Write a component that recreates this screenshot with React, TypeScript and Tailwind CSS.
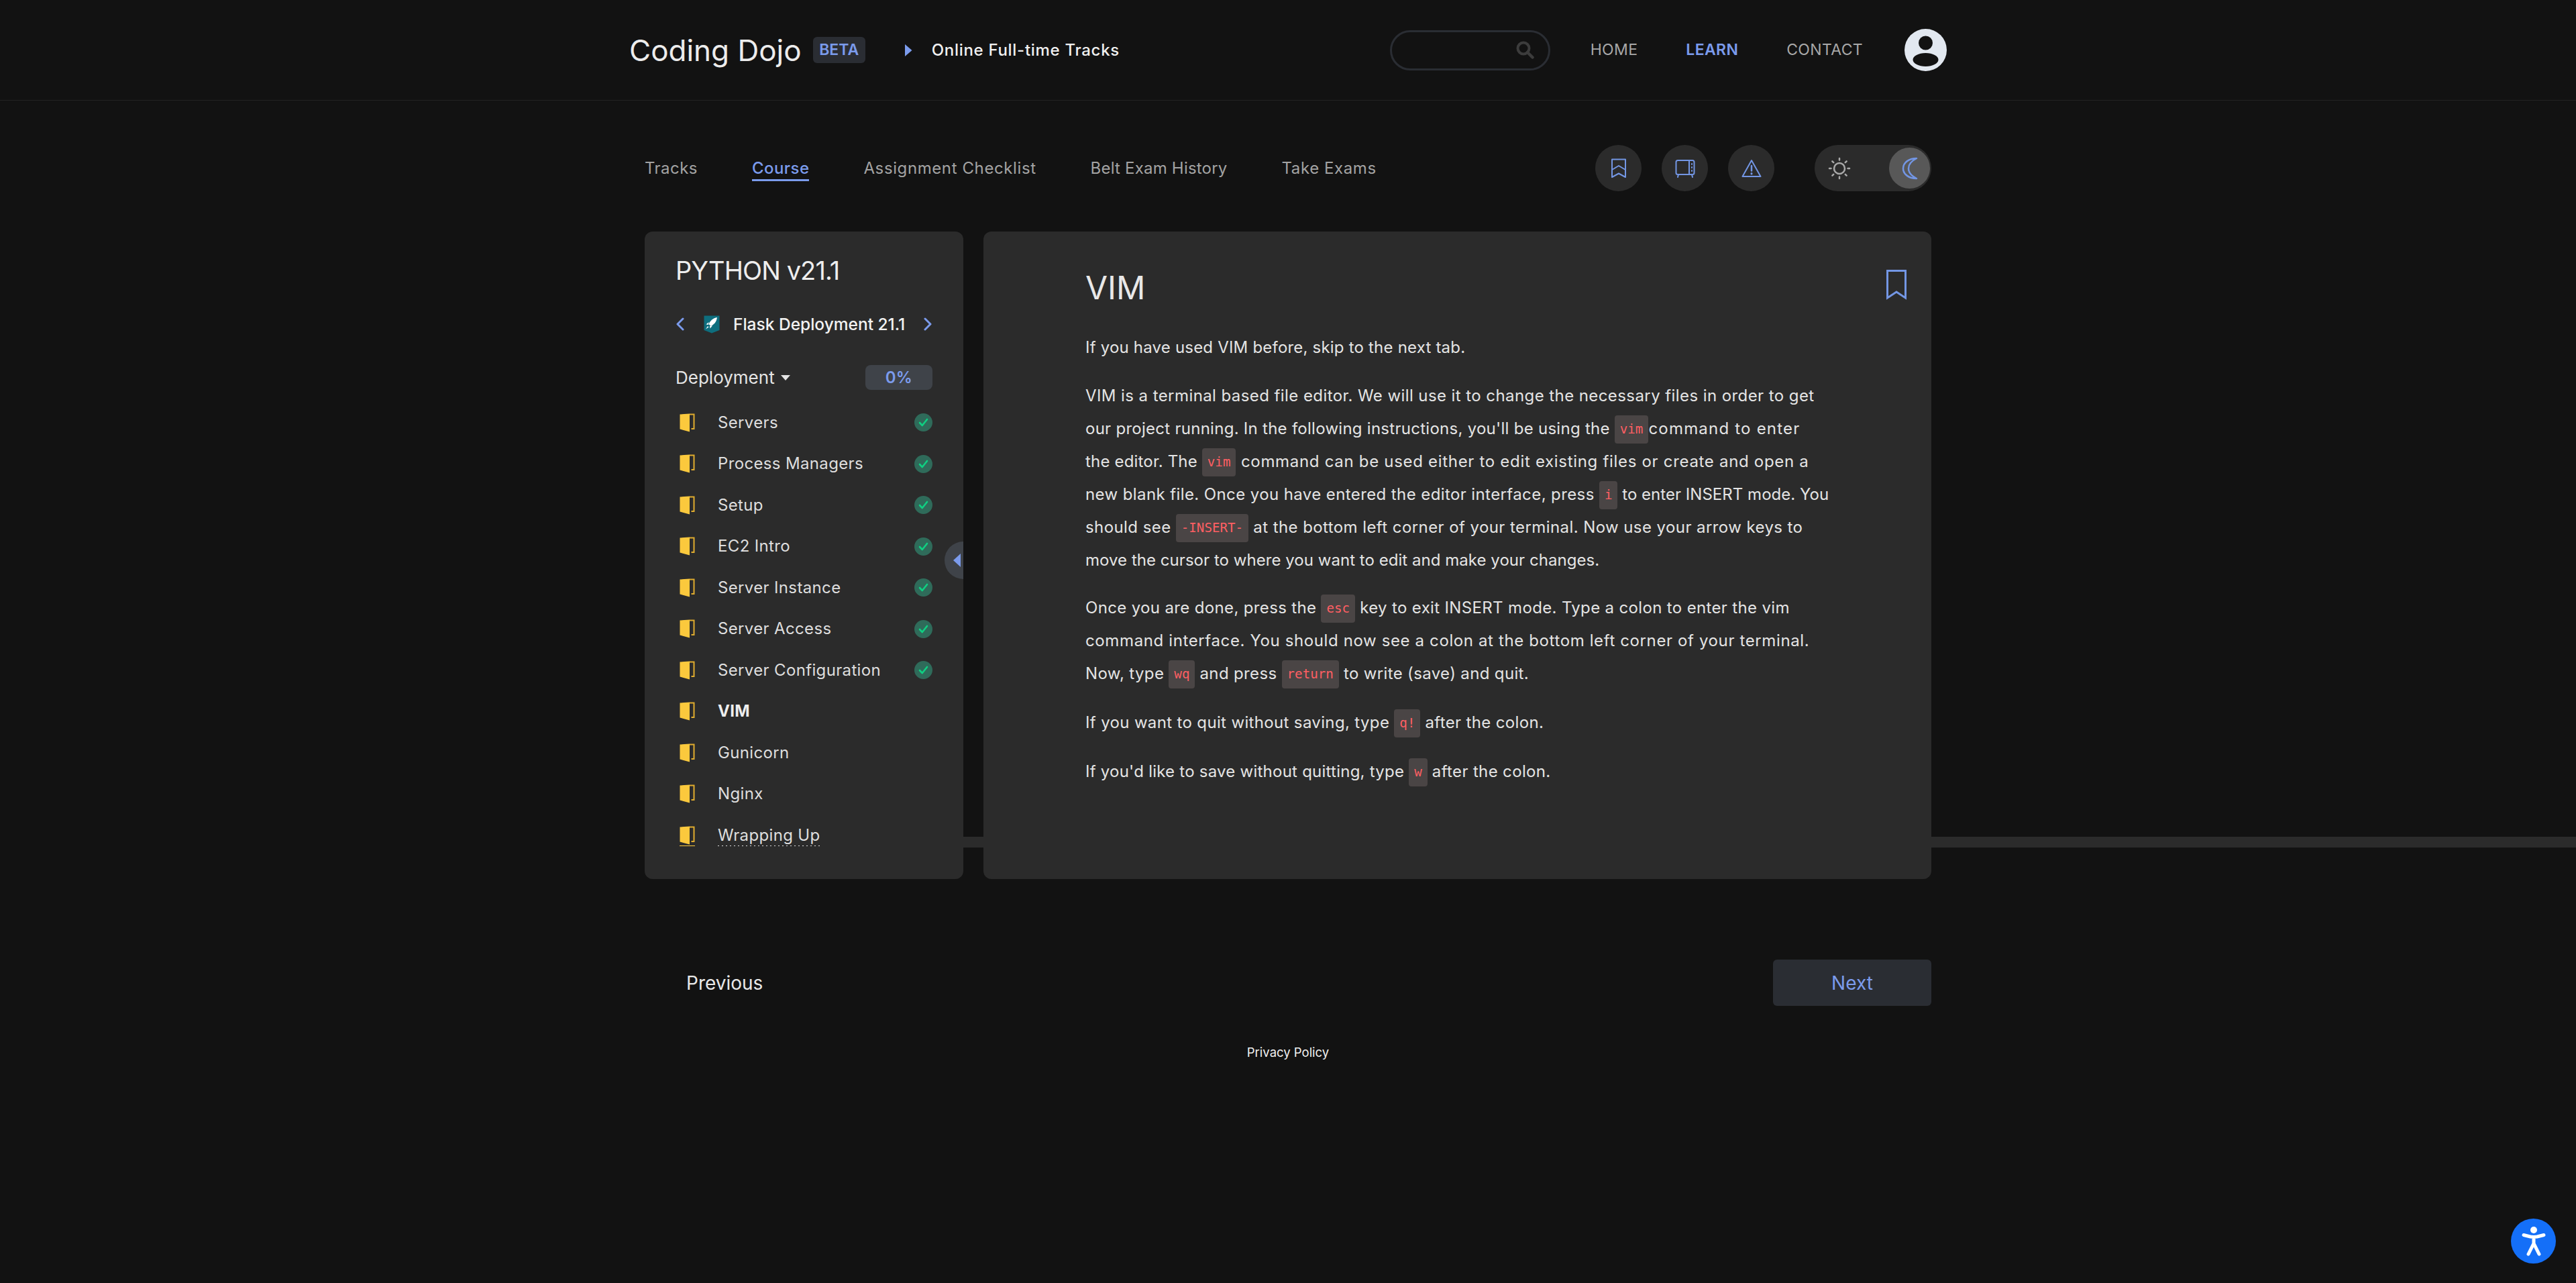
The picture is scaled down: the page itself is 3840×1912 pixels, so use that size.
import type { ReactNode } from "react"

const lessons = [
  { name: "Servers", done: true },
  { name: "Process Managers", done: true },
  { name: "Setup", done: true },
  { name: "EC2 Intro", done: true },
  { name: "Server Instance", done: true },
  { name: "Server Access", done: true },
  { name: "Server Configuration", done: true },
  { name: "VIM", done: false, active: true },
  { name: "Gunicorn", done: false },
  { name: "Nginx", done: false },
  { name: "Wrapping Up", done: false },
]

const tabs = [
  { label: "Tracks", className: "tracking-[0.45px] text-[#a3a3a3] border-transparent" },
  { label: "Course", className: "tracking-[0.45px] font-medium text-[#7b9bec] border-[#7b9bec]" },
  { label: "Assignment Checklist", className: "tracking-[0.6px] text-[#a3a3a3] border-transparent" },
  { label: "Belt Exam History", className: "tracking-[0.2px] text-[#a3a3a3] border-transparent" },
  { label: "Take Exams", className: "tracking-[0.6px] text-[#a3a3a3] border-transparent" },
]

const Code = ({ children }: { children: ReactNode }) => (
  <code className="inline-block h-[42px] rounded-[4px] bg-[#4a4545] px-2 align-middle font-['DejaVu_Sans_Mono',monospace] text-[19.2px] leading-[42px] tracking-normal text-[#ff5f63]">
    {children}
  </code>
)

const Door = () => (
  <svg width="23" height="28" viewBox="0 0 23 28" className="shrink-0">
    <path d="M0.5 1.5 L15 0.5 V27.5 L0.5 23.5 Z" fill="#fbc93d" />
    <path d="M15 1.5 H21.5 V23 H17.5" fill="none" stroke="#e0ac2f" strokeWidth="2" />
  </svg>
)

const Check = () => (
  <div className="flex h-[27px] w-[27px] items-center justify-center rounded-full bg-[#2f6b5a]">
    <svg width="15" height="13" viewBox="0 0 15 13">
      <path d="M2 7 L5.8 11 L13 2" fill="none" stroke="#10cf82" strokeWidth="2.6" strokeLinecap="round" strokeLinejoin="round" />
    </svg>
  </div>
)

const Chevron = ({ left }: { left?: boolean }) => (
  <svg width="13" height="20" viewBox="0 0 13 20">
    <path d={left ? "M11 2 L3 10 L11 18" : "M2 2 L10 10 L2 18"} fill="none" stroke="#7b9bec" strokeWidth="3" strokeLinecap="round" strokeLinejoin="round" />
  </svg>
)

const RoundIcon = ({ children }: { children: ReactNode }) => (
  <div className="flex h-[69px] w-[69px] items-center justify-center rounded-full bg-[#2b2b2b]">{children}</div>
)

const stroke = { fill: "none", stroke: "#7396e4", strokeWidth: 2, strokeLinecap: "round", strokeLinejoin: "round" } as const

export default function App() {
  return (
    <div className="relative min-h-[1912px] overflow-hidden bg-[#121212] font-['Inter',sans-serif] text-[24px] tracking-[0.35px] text-[#e4e4e4]">
      {/* stray bar behind the lesson panel */}
      <div className="absolute left-[1436px] right-0 top-[1247px] h-[16px] bg-[#2b2b2b]" />

      <header className="h-[150px] border-b border-[#222222]">
        <div className="mx-auto flex h-[149px] w-[1964px] items-center">
          <span className="text-[44px] leading-none tracking-normal text-[#ececec]">Coding Dojo</span>
          <span className="ml-[17px] flex h-[39px] w-[78px] items-center justify-center rounded-[6px] bg-[#2a2d33] text-[23px] font-semibold tracking-normal text-[#7b9bec]">
            BETA
          </span>
          <svg width="11" height="18" viewBox="0 0 11 18" className="ml-[59px]">
            <path d="M0 0 L10.5 9 L0 18 Z" fill="#7b9bec" />
          </svg>
          <span className="ml-[29px] font-medium tracking-[0.7px] text-[#f0f0f0]">Online Full-time Tracks</span>
          <div className="ml-auto flex h-[60px] w-[239px] items-center justify-end rounded-full border-[3px] border-[#2a2d33] pr-[21px]">
            <svg width="27" height="27" viewBox="0 0 27 27">
              <circle cx="11" cy="11" r="8.5" fill="none" stroke="#3c3c3c" strokeWidth="4" />
              <path d="M17 17 L24.5 24.5" stroke="#3c3c3c" strokeWidth="4.5" strokeLinecap="round" />
            </svg>
          </div>
          <nav className="ml-[60px] flex items-center gap-[72px] text-[23px]">
            <span className="text-[#a8a8a8]">HOME</span>
            <span className="font-semibold text-[#7b9bec]">LEARN</span>
            <span className="text-[#a8a8a8]">CONTACT</span>
          </nav>
          <svg width="63" height="63" viewBox="0 0 63 63" className="ml-[62px]">
            <circle cx="31.5" cy="31.5" r="31.5" fill="#e2e8f0" />
            <circle cx="31.5" cy="21" r="10.5" fill="#121212" />
            <ellipse cx="31.5" cy="46" rx="19" ry="10" fill="#121212" />
          </svg>
        </div>
      </header>

      <div className="relative mx-auto w-[1918px] pt-[66px]">
        <div className="flex h-[69px] items-center">
          <nav className="mt-[3px] flex items-center gap-[81px]">
            {tabs.map((tab) => (
              <span key={tab.label} className={`border-b-[3px] leading-[32px] ${tab.className}`}>
                {tab.label}
              </span>
            ))}
          </nav>
          <div className="ml-auto flex items-center gap-[30px]">
            <RoundIcon>
              <svg width="24" height="30" viewBox="0 0 24 30" {...stroke}>
                <path d="M2 1.5 H22 V28 L12 22.5 L2 28 Z" />
                <path d="M2 17 L12 11 L22 17" />
              </svg>
            </RoundIcon>
            <RoundIcon>
              <svg width="30" height="28" viewBox="0 0 30 28" {...stroke}>
                <rect x="1.5" y="2" width="27" height="21" rx="2.5" />
                <path d="M21 2 V23 M5 23 L4 27 M25 23 L26 27" />
                <path d="M25 7 V8 M25 12 V13 M25 17 V18" />
              </svg>
            </RoundIcon>
            <RoundIcon>
              <svg width="30" height="28" viewBox="0 0 30 28" {...stroke}>
                <path d="M15 2 L28.5 26 H1.5 Z" />
                <path d="M15 10 V17.5" strokeWidth="2.5" />
                <path d="M15 21.5 V22" strokeWidth="3" />
              </svg>
            </RoundIcon>
            <div className="ml-[30px] flex h-[69px] w-[174px] items-center justify-between rounded-full bg-[#2b2b2b] pl-[20px] pr-[2px]">
              <svg width="34" height="34" viewBox="0 0 34 34" fill="none" stroke="#a8a8a8" strokeWidth="2.5" strokeLinecap="round">
                <circle cx="17" cy="17" r="8" />
                <path d="M17 2 V4.5 M17 29.5 V32 M2 17 H4.5 M29.5 17 H32 M6.4 6.4 L8.2 8.2 M25.8 25.8 L27.6 27.6 M6.4 27.6 L8.2 25.8 M25.8 8.2 L27.6 6.4" />
              </svg>
              <div className="flex h-[61px] w-[61px] items-center justify-center rounded-full bg-[#585858]">
                <svg width="26" height="34" viewBox="0 0 26 34" {...stroke} strokeWidth="2.5">
                  <path d="M23 2 C12 2 3 8 3 17 C3 26 12 32 23 32 C15 28 11 23 11 17 C11 11 15 6 23 2 Z" />
                </svg>
              </div>
            </div>
          </div>
        </div>

        <div className="mt-[60px] flex h-[965px] gap-[30px]">
          <aside className="relative w-[475px] rounded-[12px] bg-[#2b2b2b] px-[46px] pt-[30px]">
            <h2 className="text-[38px] leading-[56px] tracking-[-0.9px] text-[#eeeeee]">PYTHON v21.1</h2>
            <div className="mt-[27px] flex h-[50px] items-center">
              <Chevron left />
              <svg width="24" height="27" viewBox="0 0 24 27" className="ml-[29px]">
                <path d="M0.5 0.5 H23.5 V22 L12 26.5 L0.5 22 Z" fill="#0e6e7e" />
                <path d="M20 3 C14 4 9.5 8 7.5 13 L10.5 16 C15 14 19 10 20 3 Z" fill="#ffffff" />
                <path d="M7.5 10 L3.5 13.5 L7 14 Z M13 15.5 L9.5 19.5 L9 16 Z M6 16 L3 20.5 L7.5 17.5 Z" fill="#ffffff" />
              </svg>
              <span className="ml-[20px] whitespace-nowrap text-[24.5px] font-medium tracking-normal text-[#f2f2f2]">Flask Deployment 21.1</span>
              <span className="ml-auto flex">
                <Chevron />
              </span>
            </div>
            <div className="mt-[36px] flex h-[37px] items-center">
              <span className="text-[26px] tracking-normal text-[#e4e4e4]">Deployment</span>
              <svg width="14" height="8" viewBox="0 0 14 8" className="ml-[9px]">
                <path d="M0 0 H14 L7 8 Z" fill="#e4e4e4" />
              </svg>
              <span className="ml-auto flex h-[37px] w-[100px] items-center justify-center rounded-[8px] bg-[#3f4349] font-semibold text-[#7b9bec]">
                0%
              </span>
            </div>
            <ul className="mt-[18px] h-[663px] overflow-hidden">
              {lessons.map((lesson) => (
                <li key={lesson.name} className="flex h-[61.5px] items-center pl-[6px]">
                  <Door />
                  <span className={lesson.active ? "ml-[34px] font-bold text-[#eeeeee]" : "ml-[34px] text-[#dedede]"}>{lesson.name}</span>
                  {lesson.done && (
                    <span className="ml-auto">
                      <Check />
                    </span>
                  )}
                </li>
              ))}
            </ul>
            {/* leftover sliver under the clipped list */}
            <div className="flex h-[1px] -translate-y-[2px] items-center pl-[6px]">
              <div className="h-[1px] w-[23px] bg-[#fbc93d]" />
              <div className="ml-[34px] h-[1px] w-[155px] bg-[repeating-linear-gradient(90deg,#dddddd_0_2px,transparent_2px_6px)]" />
            </div>
            <button className="absolute left-[447px] top-[462px] flex h-[56px] w-[28px] items-center justify-end overflow-hidden rounded-l-full bg-[#3f4349] pr-[4px]">
              <svg width="11" height="20" viewBox="0 0 11 20">
                <path d="M11 0 V20 L0 10 Z" fill="#7b9bec" />
              </svg>
            </button>
          </aside>

          <main className="relative w-[1413px] rounded-[12px] bg-[#2b2b2b] pl-[152px] pt-[56px]">
            <svg width="30" height="45" viewBox="0 0 30 45" className="absolute right-[37px] top-[57px]" fill="none" stroke="#7396e4" strokeWidth="3">
              <path d="M1.5 1.5 H28.5 V42 L15 33 L1.5 42 Z" />
            </svg>
            <h1 className="text-[48px] leading-[56px] tracking-normal text-[#e8e8e8]">VIM</h1>
            <div className="mt-[36px] whitespace-nowrap leading-[49px]">
              <p className="mb-[23px] tracking-[0.2px]">If you have used VIM before, skip to the next tab.</p>
              <p className="mb-[22px]">
                <span className="tracking-[0.42px]">VIM is a terminal based file editor. We will use it to change the necessary files in order to get</span>
                <br />
                <span className="tracking-[0.27px]">our project running. In the following instructions, you'll be using the </span>
                <Code>vim</Code>
                <span className="tracking-[1.2px]">command to enter</span>
                <br />
                <span className="tracking-[0.18px]">the editor. The </span>
                <Code>vim</Code>
                <span className="tracking-[0.69px]"> command can be used either to edit existing files or create and open a</span>
                <br />
                <span className="tracking-[0.4px]">new blank file. Once you have entered the editor interface, press </span>
                <Code>i</Code>
                <span className="tracking-[0.03px]"> to enter INSERT mode. You</span>
                <br />
                <span className="tracking-[0.42px]">should see </span>
                <Code>-INSERT-</Code>
                <span className="tracking-[0.42px]"> at the bottom left corner of your terminal. Now use your arrow keys to</span>
                <br />
                <span className="tracking-[0.04px]">move the cursor to where you want to edit and make your changes.</span>
              </p>
              <p className="mb-[24px]">
                Once you are done, press the <Code>esc</Code> key to exit INSERT mode. Type a colon to enter the vim
                <br />
                <span className="tracking-[0.62px]">command interface. You should now see a colon at the bottom left corner of your terminal.</span>
                <br />
                Now, type <Code>wq</Code> and press <Code>return</Code> to write (save) and quit.
              </p>
              <p className="mb-[24px]">
                If you want to quit without saving, type <Code>q!</Code> after the colon.
              </p>
              <p>
                <span className="tracking-[0.24px]">If you'd like to save without quitting, type </span>
                <Code>w</Code> after the colon.
              </p>
            </div>
          </main>
        </div>

        <div className="mt-[120px] flex h-[69px] items-center justify-between">
          <span className="pl-[62px] text-[28px] tracking-normal text-[#e8e8e8]">Previous</span>
          <button className="h-[69px] w-[236px] rounded-[6px] bg-[#2a2d33] text-[28px] tracking-normal text-[#7b9bec]">Next</button>
        </div>
        <div className="mt-[55px] text-center text-[18.5px] leading-[28px] tracking-normal text-[#f0f0f0]">Privacy Policy</div>
      </div>

      <button className="fixed left-[3743px] top-[1816px] flex h-[67px] w-[67px] items-center justify-center rounded-full bg-[#146ff8]">
        <svg width="36" height="46" viewBox="0 0 36 46">
          <circle cx="18" cy="6" r="5" fill="#ffffff" />
          <path d="M3 13.5 L13 16 L18 16.5 L23 16 L33 13.5 M18 16.5 V26 M18 26 L10 42 M18 26 L26 42" fill="none" stroke="#ffffff" strokeWidth="5" strokeLinecap="round" strokeLinejoin="round" />
        </svg>
      </button>
    </div>
  )
}
